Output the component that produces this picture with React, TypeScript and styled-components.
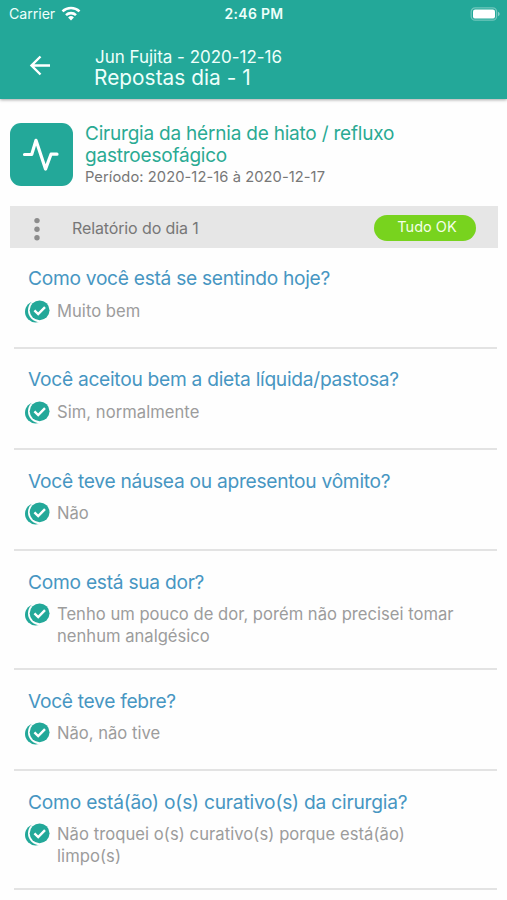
import React from 'react';
import styled, { createGlobalStyle } from 'styled-components';

const teal = '#23a899';

const GlobalStyle = createGlobalStyle`
  * { box-sizing: border-box; }
  body { margin: 0; background: #fefefe; font-family: Inter, "Liberation Sans", sans-serif; }
`;

const Screen = styled.div`
  width: 507px;
  height: 900px;
  overflow: hidden;
  background: #fefefe;
`;

const Header = styled.header`
  height: 98.5px;
  background: ${teal};
  color: #eefffb;
  box-shadow: 0 1px 3px rgba(0, 0, 0, 0.35);
`;

const StatusBar = styled.div`
  display: grid;
  grid-template-columns: 1fr auto 1fr;
  align-items: center;
  height: 28px;
  padding: 0 7px 0 9px;
`;

const Carrier = styled.div`
  display: flex;
  align-items: center;
  gap: 6px;
  font-size: 14.2px;
  line-height: 18px;
  letter-spacing: -0.05px;
`;

const Clock = styled.div`
  font-size: 13.9px;
  font-weight: 600;
  line-height: 18px;
  letter-spacing: 0.35px;
  margin-right: 1px;
`;

const BatterySlot = styled.div`
  display: flex;
  justify-content: flex-end;
  margin-top: -1px;
`;

const NavBar = styled.div`
  display: flex;
  padding: 19px 0 0 29px;
`;

const BackButton = styled.button`
  display: flex;
  width: 65px;
  height: 36px;
  padding: 8px 0 0;
  border: 0;
  background: none;
  color: #fff;
`;

const Titles = styled.div`
  display: flex;
  flex-direction: column;
  white-space: nowrap;
`;

const Patient = styled.div`
  font-size: 17px;
  line-height: 20px;
  padding-left: 1px;
  letter-spacing: -0.02px;
`;

const PageTitle = styled.h1`
  margin: 0;
  font-size: 20.8px;
  font-weight: 400;
  line-height: 21px;
  letter-spacing: 0.05px;
`;

const Procedure = styled.section`
  display: flex;
  gap: 12px;
  padding: 24.5px 10px 0;
`;

const ProcedureIcon = styled.div`
  width: 63px;
  height: 62.5px;
  border-radius: 11px;
  background: ${teal};
`;

const ProcedureName = styled.h2`
  margin: 0;
  color: #2aaa93;
  font-size: 19px;
  font-weight: 400;
  line-height: 22px;
  letter-spacing: -0.21px;
  white-space: nowrap;
`;

const Period = styled.div`
  color: #777;
  font-size: 14.7px;
  line-height: 20px;
  letter-spacing: 0.07px;
  white-space: nowrap;
`;

const ReportBar = styled.div`
  display: flex;
  align-items: center;
  height: 41.5px;
  margin: 19px 9px 0 10px;
  padding-right: 22px;
  background: #e6e6e6;
`;

const ReportTitle = styled.div`
  flex: 1;
  padding: 3px 0 0 28px;
  color: #777;
  font-size: 16px;
  line-height: 20px;
  letter-spacing: -0.12px;
`;

const StatusPill = styled.div`
  width: 102px;
  height: 26px;
  margin-top: 2px;
  border-radius: 13px;
  background: #78d31e;
  color: #f4ffe8;
  font-size: 14.5px;
  line-height: 24px;
  text-align: center;
  padding-left: 4px;
`;

const Answers = styled.ul`
  list-style: none;
  margin: 0 10px 0 14px;
  padding: 0;
`;

const Item = styled.li`
  min-height: 101.3px;
  padding: 18.5px 0 20.7px 14px;
  border-bottom: 2px solid #e3e3e3;
`;

const Question = styled.h3<{ $tracking: number }>`
  margin: 0;
  color: #4796c2;
  font-size: 19.2px;
  font-weight: 400;
  line-height: 24px;
  letter-spacing: ${(p) => p.$tracking}px;
  white-space: nowrap;
`;

const AnswerRow = styled.div`
  display: flex;
  gap: 7px;
  margin: 9.5px 0 0 -4px;
`;

const Answer = styled.div<{ $tracking: number }>`
  color: #9c9c9c;
  font-size: 16.6px;
  line-height: 22px;
  letter-spacing: ${(p) => p.$tracking}px;
  white-space: nowrap;
`;

const Wifi = () => (
  <svg width="20" height="16" viewBox="0 0 20 16" fill="none" stroke="#fff" strokeWidth="2.6">
    <path d="M1.5 5.4C6.3 0.9 13.7 0.9 18.5 5.4" />
    <path d="M5 9.1C7.8 6.5 12.2 6.5 15 9.1" />
    <path d="M7.1 11.4a4.2 4.2 0 0 1 5.8 0L10 14.5z" fill="#fff" stroke="none" />
  </svg>
);

const Battery = () => (
  <svg width="30" height="14" viewBox="0 0 30 14">
    <rect x="1.2" y="0.8" width="25.4" height="12.4" rx="4" fill="none" stroke="#fff" strokeOpacity="0.35" strokeWidth="1.3" />
    <rect x="3" y="2.4" width="22" height="9.2" rx="2.2" fill="#fff" />
    <path d="M28 4.8c2.2.8 2.2 3.6 0 4.4z" fill="#fff" fillOpacity="0.45" />
  </svg>
);

const BackArrow = () => (
  <svg width="22" height="22" viewBox="0 0 22 22" fill="none" stroke="#fff" strokeWidth="2.4">
    <path d="M21 10.5H3M11.5 1.5l-9 9 9 9" />
  </svg>
);

const Pulse = () => (
  <svg width="63" height="62.5" viewBox="0 0 63 62.5" fill="none" stroke="#fff" strokeWidth="3.2" strokeLinecap="round" strokeLinejoin="round">
    <path d="M14.5 31.5h7.2L26 17.3l9.5 28.8L41 31.2h6" />
  </svg>
);

const Dots = () => (
  <svg width="34" height="28" viewBox="0 0 34 28" fill="#8c8c8c">
    <circle cx="27" cy="7.6" r="2.7" />
    <circle cx="27" cy="16.2" r="2.7" />
    <circle cx="27" cy="24.7" r="2.7" />
  </svg>
);

const DoubleCheck = () => (
  <svg width="26" height="24" viewBox="0 0 26 24">
    <circle cx="11.6" cy="11.8" r="10.6" fill={teal} />
    <circle cx="15.9" cy="10.3" r="11.9" fill="#fefefe" />
    <circle cx="15.6" cy="10.3" r="9.9" fill={teal} />
    <path d="M10.4 10.4l3.8 3.7 6.8-7" fill="none" stroke="#fff" strokeWidth="2.4" />
  </svg>
);

type Entry = { question: string; qTracking: number; answer: string[]; aTracking: number };

const entries: Entry[] = [
  { question: 'Como você está se sentindo hoje?', qTracking: -0.29, answer: ['Muito bem'], aTracking: 0.02 },
  { question: 'Você aceitou bem a dieta líquida/pastosa?', qTracking: -0.28, answer: ['Sim, normalmente'], aTracking: 0.04 },
  { question: 'Você teve náusea ou apresentou vômito?', qTracking: -0.28, answer: ['Não'], aTracking: 0 },
  {
    question: 'Como está sua dor?',
    qTracking: -0.27,
    answer: ['Tenho um pouco de dor, porém não precisei tomar', 'nenhum analgésico'],
    aTracking: 0.01,
  },
  { question: 'Você teve febre?', qTracking: -0.3, answer: ['Não, não tive'], aTracking: 0 },
  {
    question: 'Como está(ão) o(s) curativo(s) da cirurgia?',
    qTracking: -0.22,
    answer: ['Não troquei o(s) curativo(s) porque está(ão)', 'limpo(s)'],
    aTracking: 0.06,
  },
];

export default function App() {
  return (
    <Screen>
      <GlobalStyle />
      <Header>
        <StatusBar>
          <Carrier>
            Carrier
            <Wifi />
          </Carrier>
          <Clock>2:46 PM</Clock>
          <BatterySlot>
            <Battery />
          </BatterySlot>
        </StatusBar>
        <NavBar>
          <BackButton aria-label="Voltar">
            <BackArrow />
          </BackButton>
          <Titles>
            <Patient>Jun Fujita - 2020-12-16</Patient>
            <PageTitle>Repostas dia - 1</PageTitle>
          </Titles>
        </NavBar>
      </Header>
      <Procedure>
        <ProcedureIcon>
          <Pulse />
        </ProcedureIcon>
        <div>
          <ProcedureName>
            Cirurgia da hérnia de hiato / refluxo
            <br />
            gastroesofágico
          </ProcedureName>
          <Period>Período: 2020-12-16 à 2020-12-17</Period>
        </div>
      </Procedure>
      <ReportBar>
        <Dots />
        <ReportTitle>Relatório do dia 1</ReportTitle>
        <StatusPill>Tudo OK</StatusPill>
      </ReportBar>
      <Answers>
        {entries.map((e) => (
          <Item key={e.question}>
            <Question $tracking={e.qTracking}>{e.question}</Question>
            <AnswerRow>
              <DoubleCheck />
              <Answer $tracking={e.aTracking}>
                {e.answer.map((line) => (
                  <div key={line}>{line}</div>
                ))}
              </Answer>
            </AnswerRow>
          </Item>
        ))}
      </Answers>
    </Screen>
  );
}
